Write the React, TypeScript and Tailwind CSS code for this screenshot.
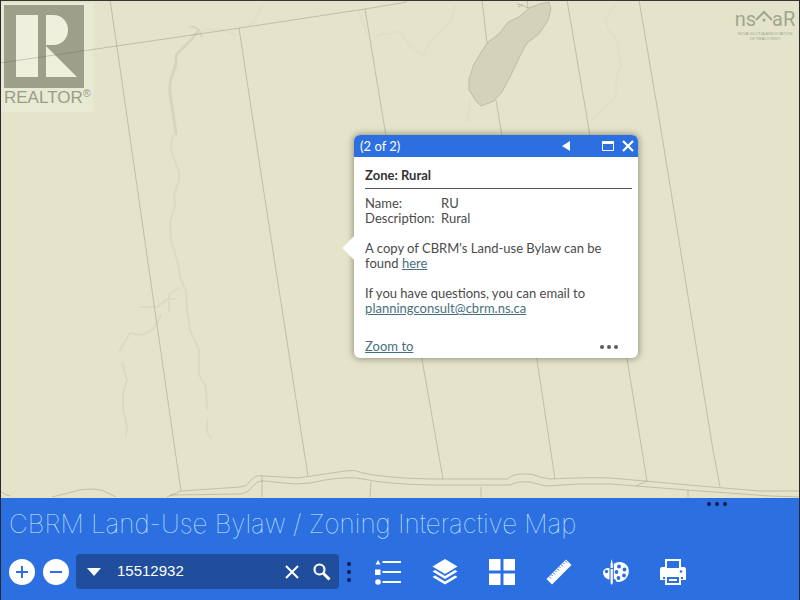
import type { ReactNode } from 'react'

const parcelLines = [
  'M0 63 L240 28 L365 9 L407 2',
  'M110 0 L117 47 L139 200 L157 325 L175 450 L181 491',
  'M239 28 L262 180 L300 425 L308 476',
  'M365 9 L385 130 L423 365 L443 479',
  'M482 0 L487 43 M496 100 L501 130 L537 360 L555 479',
  'M567 0 L589 130 L628 365 L647 481',
  'M639 0 L661 130 L713 450 L720 487',
  'M527 0 L528 8',
]

const roads = [
  'M0 491 Q5 495 10 496 M52 497 L80 490 Q98 487 108 493 L116 497',
  'M167 497 L181 491 L240 487 Q248 486 250 481 Q256 474 264 476 L298 478 L345 471 Q355 469 363 473 Q385 478 430 479 L508 479 Q512 474 522 474 Q532 473 540 477 L550 479 Q590 477 610 478 L645 481 L700 486 L760 491 L800 491',
  'M170 495 L240 494 Q248 493 252 487 Q258 480 264 481 L295 484 Q310 484 325 480 Q350 476 363 479 Q385 484 430 485 L510 485 Q517 481 530 482 L546 486 Q580 483 610 484 L636 486 L700 491 L770 496 L800 497 M636 486 L647 481',
  'M262 476 V497 M371 482 L370 497 M481 487 V497 M688 490 V497',
]

function MapCanvas() {
  return (
    <svg className="absolute inset-0 h-full w-full" viewBox="1 1 798 497" preserveAspectRatio="xMidYMid slice" fill="none" aria-hidden="true">
      <g stroke="#d6d6bf" strokeLinejoin="round" strokeLinecap="round">
        <path strokeWidth="2" d="M190 27 Q197 26 200 32 L202 37" />
        <path strokeWidth="3" d="M198 31 Q193 37 190 41 Q182 49 176 55 L176 64 L172 76 Q168 86 171 100 L174 120 L176 134" />
        <path strokeWidth="2" strokeOpacity=".6" d="M173 136 Q169 146 173 156 L179 172 L179 180 L174 195 L175 207 L170 222 L171 240 L178 264 L181 280 L186 290 L187 310 L190 330 L199 350 L199 375 L206 387 L207 410 M207 420 L207 432 L211 438" />
        <path strokeWidth="2" strokeOpacity=".6" d="M179 288 L169 294 L169 311 M175 299 H168 L157 307 H140 M161 315 L156 325 Q150 334 140 335 L130 333 L119 352 M122 362 L127 380 L123 393 L123 410 L127 425 L126 435" />
        <path strokeWidth="2" strokeOpacity=".3" d="M616 4 L606 17 L607 28 L617 40 L621 66 L617 76 L615 98 L605 108 L592 119 M470 100 L467 120 M204 29 L225 31 L236 35 M262 5 L254 22 L248 26 M359 12 L367 34 M376 38 Q378 33 388 34 L398 31 L404 37 L413 50 L424 55 L427 47 L440 32 L451 22 L455 6" />
      </g>
      <path fill="#d3d2bb" stroke="#bdbda5" d="M549 2 L551 8 L548 20 L539 34 L527 43 L520 56 L511 75 L502 92 L494 101 L481 106 L476 101 L469 90 L469 79 L474 64 L487 43 L500 33 L508 22 L519 17 L529 8 L540 4 Z" />
      <path stroke="#bdbda5" d="M517 4 L522 5 L528 8 M518 7 L523 5" />
      <g stroke="#55533a" strokeOpacity=".25" strokeLinejoin="round">
        {parcelLines.map((d) => <path key={d} d={d} />)}
        {roads.map((d) => <path key={d} d={d} />)}
      </g>
    </svg>
  )
}

function RealtorLogo() {
  return (
    <div className="absolute top-0.5 left-0 w-23 bg-[#e9ebd6]/80 pt-0.5 pb-1 pl-[3px]">
      <svg className="h-[83px] w-20" viewBox="0 0 80 83" role="img" aria-label="Realtor">
        <path fill="#9d9f8a" d="M0 0 H80 V83 H0 Z" />
        <path fill="#eeefdc" d="M12 10 H34 V72 H12 Z M42 10 H49 C69 10 69 40 49 40 H42 Z M42 41 L73 72 H42 Z" />
      </svg>
      <div className="flex text-[17px] leading-5 text-[#9a9c87]">
        REALTOR<sup className="top-0 text-[11px] leading-none">®</sup>
      </div>
    </div>
  )
}

function NsaarLogo() {
  return (
    <div className="absolute top-2 right-1 flex w-15 flex-col items-center text-[#a3a48e]">
      <div className="flex items-center font-[Roboto] text-[20px] leading-5">
        <span>ns</span>
        <svg className="h-5 w-4 shrink-0" viewBox="0 0 16 20" fill="none" stroke="currentColor" strokeWidth="2" overflow="visible" aria-hidden="true">
          <path d="M0 11 L8 3 L16 11" />
          <circle cx="8" cy="11" r="1.5" fill="currentColor" stroke="none" />
        </svg>
        <span>aR</span>
      </div>
      <div className="mt-0.5 flex flex-col items-center text-[4px] leading-[5px] whitespace-nowrap">
        <span>NOVA SCOTIA ASSOCIATION</span>
        <span>OF REALTORS®</span>
      </div>
    </div>
  )
}

function ZonePopup() {
  return (
    <div role="dialog" aria-label="Zone" className="absolute top-[134px] left-[44.25%] w-71 rounded-md bg-white font-[Lato] text-[13px] leading-[15px] text-[#4b4b4b] shadow-[0_0_6px_1px_rgba(70,70,50,0.5)]">
      <div className="absolute top-[101px] -left-3 h-6 w-3 bg-white [clip-path:polygon(100%_0,0_50%,100%_100%)]" />
      <header className="flex h-[22px] items-center rounded-t-md bg-[#2c6fe0] px-1 text-white">
        <span className="flex-1 pl-0.5">(2 of 2)</span>
        <button type="button" aria-label="Previous feature" className="mr-8">
          <svg className="h-2.5 w-2" viewBox="0 0 8 10" fill="currentColor"><path d="M8 0 V10 L0 5 Z" /></svg>
        </button>
        <button type="button" aria-label="Maximize" className="mr-2">
          <svg className="h-2.5 w-3" viewBox="0 0 12 10" fill="none" stroke="currentColor"><path d="M.5 0 V9.5 H11.5 V0" /><path strokeWidth="3" d="M0 1.5 H12" /></svg>
        </button>
        <button type="button" aria-label="Close">
          <svg className="size-3" viewBox="0 0 12 12" fill="none" stroke="currentColor" strokeWidth="2.200"><path d="M1 1 L11 11 M11 1 L1 11" /></svg>
        </button>
      </header>
      <div className="pt-[11px] pr-1.5 pl-[11px]">
        <h2 className="border-b border-[#555] pb-[5px] font-bold text-[#333]">Zone: Rural</h2>
        <dl className="mt-[7px] grid grid-cols-[76px_1fr]">
          <dt>Name:</dt><dd>RU</dd>
          <dt>Description:</dt><dd>Rural</dd>
        </dl>
        <p className="mt-[15px]">A copy of CBRM's Land-use Bylaw can be<br />found <a href="#bylaw" className="text-[#47707d] underline">here</a></p>
        <p className="mt-[15px]">If you have questions, you can email to<br /><a href="mailto:planningconsult@cbrm.ns.ca" className="text-[#47707d] underline">planningconsult@cbrm.ns.ca</a></p>
      </div>
      <footer className="mt-4 flex items-center justify-between pt-[7px] pr-5 pb-1 pl-[11px]">
        <a href="#zoom" className="text-[#47707d] underline">Zoom to</a>
        <button type="button" aria-label="More actions" className="flex gap-[3px]">
          <Dots className="size-1 rounded-full bg-[#5a5a5a]" />
        </button>
      </footer>
    </div>
  )
}

function Dots({ className }: { className: string }) {
  return <><span className={className} /><span className={className} /><span className={className} /></>
}

function Tool({ label, children }: { label: string; children: ReactNode }) {
  return (
    <button type="button" aria-label={label}>
      <svg className="size-[26px]" viewBox="0 0 26 26" fill="currentColor">{children}</svg>
    </button>
  )
}

function Toolbar() {
  return (
    <div className="flex items-center pl-2 text-white">
      <button type="button" aria-label="Zoom in" className="flex size-[26px] items-center justify-center rounded-full bg-white text-[#2c6fe0]">
        <svg className="size-3" viewBox="0 0 12 12" fill="none" stroke="currentColor" strokeWidth="2"><path d="M6 0 V12 M0 6 H12" /></svg>
      </button>
      <button type="button" aria-label="Zoom out" className="ml-2 flex size-[26px] items-center justify-center rounded-full bg-white text-[#2c6fe0]">
        <svg className="size-3" viewBox="0 0 12 12" fill="none" stroke="currentColor" strokeWidth="2"><path d="M0 6 H12" /></svg>
      </button>
      <div className="ml-[7px] flex h-[35px] w-[263px] items-center rounded bg-[#204e9c] pr-2 pl-2.5">
        <button type="button" aria-label="Search source">
          <svg className="h-2 w-4" viewBox="0 0 16 8" fill="currentColor"><path d="M1 0 H15 L8 8 Z" /></svg>
        </button>
        <input aria-label="Search" defaultValue="15512932" className="ml-[15px] min-w-0 flex-1 bg-transparent font-['Liberation_Sans'] text-[15px] outline-none" />
        <button type="button" aria-label="Clear search">
          <svg className="size-3.5" viewBox="0 0 14 14" fill="none" stroke="currentColor" strokeWidth="2"><path d="M1 1 L13 13 M13 1 L1 13" /></svg>
        </button>
        <button type="button" aria-label="Run search" className="ml-3.5">
          <svg className="size-[18px]" viewBox="0 0 18 18" fill="none" stroke="currentColor"><circle cx="6.500" cy="6.500" r="5" strokeWidth="2.200" /><path strokeWidth="3" d="M10.500 10.500 L16.500 16.500" /></svg>
        </button>
      </div>
      <button type="button" aria-label="More" className="ml-2 flex flex-col gap-1">
        <Dots className="size-1 rounded-full bg-[#0c1d4c]" />
      </button>
      <nav aria-label="Map tools" className="ml-6 flex gap-[31px]">
        <Tool label="Legend">
          <path d="M3 1 L5.500 5.500 H.5 Z M0 10.500 H5.500 V16 H0 Z M7.500 2 H26 V4 H7.500 Z M7.500 12 H26 V14 H7.500 Z M7.500 22 H26 V24 H7.500 Z" />
          <circle cx="3" cy="23" r="2.800" />
        </Tool>
        <Tool label="Layers">
          <path d="M13 0 L25.500 7.500 L13 15 L.5 7.500 Z" />
          <path d="M.5 12.500 L3 11 L13 17 L23 11 L25.500 12.500 L13 20 Z M.5 18 L3 16.500 L13 22.500 L23 16.500 L25.500 18 L13 25.500 Z" />
        </Tool>
        <Tool label="Basemap gallery">
          <path d="M0 0 H11.500 V11.500 H0 Z M14.500 0 H26 V11.500 H14.500 Z M0 14.500 H11.500 V26 H0 Z M14.500 14.500 H26 V26 H14.500 Z" />
        </Tool>
        <Tool label="Measurement">
          <path d="M20 .5 L25.500 6 L6 25.500 L.5 20 Z" />
          <path stroke="#2c6fe0" d="M3 17.500 L5 19.500 M5 15.500 L6.500 17 M7 13.500 L9 15.500 M9 11.500 L10.500 13 M11 9.500 L13 11.500 M13 7.500 L14.500 9 M15 5.500 L17 7.500 M17 3.500 L18.500 5 M19 1.500 L21 3.500" />
        </Tool>
        <Tool label="Draw">
          <path fillRule="evenodd" d="M6.500 9 C3 8.500 0 10.500 0 13.500 C0 17 3 20 6.500 20.500 Z" />
          <path d="M10.800 5 C14 2 22 2 25 8 C28 16 22 23 15 23 C12 23 13.500 19.500 10.800 20 Z M7.600 5 L8.700 0 L9.800 5 V9 H7.600 Z M7.600 10 H9.800 V24 L8.700 26 L7.600 24 Z" />
          <g fill="#2c6fe0"><circle cx="16" cy="7.500" r="2" /><circle cx="21.500" cy="10.500" r="1.900" /><circle cx="21" cy="16.500" r="1.900" /><circle cx="15.500" cy="19" r="1.900" /><circle cx="13.500" cy="13" r="1.900" /><circle cx="3.500" cy="12.500" r="1.700" /></g>
        </Tool>
        <Tool label="Print">
          <path fillRule="evenodd" d="M5 0 H21 V8 H24 Q26 8 26 11 V21 H21 V26 H5 V21 H0 V11 Q0 8 2 8 H5 Z M7 2 V9 H19 V2 Z M7 18 V24 H19 V18 Z" />
          <path d="M9 20 H17 V22 H9 Z" />
          <g fill="#2c6fe0"><circle cx="21" cy="12.500" r="1.300" /><path d="M3 18 H5 V20 H3 Z M21 18 H23 V20 H21 Z" /></g>
        </Tool>
      </nav>
    </div>
  )
}

export default function App() {
  return (
    <main className="flex min-h-screen flex-col border-x border-[#2a2730] bg-[#2c6fe0] font-['Liberation_Sans',sans-serif]">
      <section aria-label="Map" className="relative min-h-[400px] flex-1 overflow-hidden border-t border-[#3a3238] bg-[#e4e4ca]">
        <RealtorLogo />
        <NsaarLogo />
        <MapCanvas />
        <ZonePopup />
      </section>
      <section aria-label="Controls" className="relative pt-2 pb-[11px]">
        <button type="button" aria-label="Panel options" className="absolute top-1 right-[72px] flex gap-1">
          <Dots className="size-1 rounded-full bg-[#0c1d4c]" />
        </button>
        <h1 className="pl-2 font-[Inter] text-[26px] leading-9 font-thin whitespace-nowrap text-[#d4f2ff]">CBRM Land-Use Bylaw / Zoning Interactive Map</h1>
        <div className="mt-3"><Toolbar /></div>
      </section>
    </main>
  )
}
